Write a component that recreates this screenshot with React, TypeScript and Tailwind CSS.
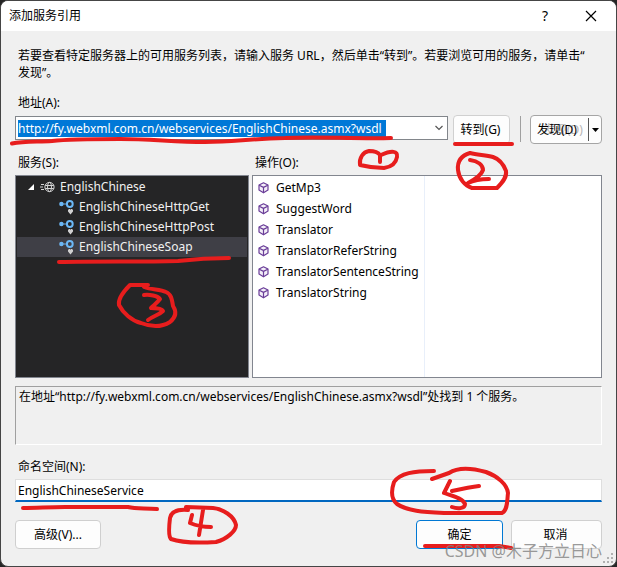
import React, { useState } from 'react';

const SERVICE_URL = 'http://fy.webxml.com.cn/webservices/EnglishChinese.asmx?wsdl';

const ports = ['EnglishChineseHttpGet', 'EnglishChineseHttpPost', 'EnglishChineseSoap'];

const operations = [
  'GetMp3',
  'SuggestWord',
  'Translator',
  'TranslatorReferString',
  'TranslatorSentenceString',
  'TranslatorString',
];

function ServiceIcon() {
  return (
    <svg className="h-3 w-4 shrink-0" viewBox="0 0 16 12" fill="none" stroke="#d4d4d4" strokeWidth="1">
      <circle cx="9.5" cy="6" r="4.6" />
      <ellipse cx="9.5" cy="6" rx="2" ry="4.6" />
      <path d="M5.2 4.5h8.6M5.2 7.5h8.6M1 3.5h3M0 6h3M1 8.5h3" />
    </svg>
  );
}

function PortIcon() {
  return (
    <svg className="h-4 w-4 shrink-0" viewBox="0 0 16 16">
      <circle cx="2.4" cy="5" r="2.2" fill="#6cb8f6" />
      <path d="M4 5h4" stroke="#6cb8f6" strokeWidth="1.2" />
      <circle cx="10.8" cy="5" r="2.9" fill="none" stroke="#6cb8f6" strokeWidth="2" />
      <path
        d="M11.5 15.5 9 12.6v-1.7l1-.9h.8l.7.7.7-.7h.8l1 .9v1.7z"
        fill="#d0d0d0"
      />
    </svg>
  );
}

function MethodIcon() {
  return (
    <svg
      className="h-3 w-3 shrink-0"
      viewBox="0 0 12 12"
      fill="#f3eef8"
      stroke="#6a3d98"
      strokeWidth="1.2"
      strokeLinejoin="round"
    >
      <path d="M5.5 .8 10 3v5l-4.500 2.800L1 8V3z" />
      <path d="M1.200 3.200 5.5 5.400l4.300-2.200M5.5 5.400v5" fill="none" />
    </svg>
  );
}

// Freehand marker strokes that number the steps
function Markers() {
  return (
    <svg
      className="pointer-events-none absolute left-0 top-0 h-[567px] w-[617px]"
      viewBox="0 0 617 567"
      fill="none"
      stroke="#e71d1d"
      strokeWidth="4"
      strokeLinecap="round"
      strokeLinejoin="round"
      aria-hidden="true"
    >
      <path d="M12 143.5C24 141 38 142 52 141C70 139 90 139 120 139C150 139 175 142 205 142C235 142 245 139 285 138C320 136 350 139 391 138" />
      <path d="M380 162V155C378 152 374 151 369 151C363 152 359 158 360 165C368 167 376 168 384 168C391 167 396 163 397 157C398 151 392 150 381 155" />
      <path d="M455 144H512" />
      <path d="M493 157C486 155 478 155 470 153C463 155 457 160 458 170C459 179 465 186 472 188H497C503 182 507 177 506 171C503 163 499 159 493 157M470 160C478 161 483 165 483 170C481 176 474 180 468 183C474 180 482 179 489 179" />
      <path d="M59 262C100 261 140 262 178 261C195 259 208 258 229 258" />
      <path d="M148 285H130C123 292 118 300 119 305C123 313 132 321 141 323C151 327 162 327 170 322C176 317 177 312 173 306C172 299 171 294 166 292C160 289 152 290 144 287M144 295C149 294 158 296 160 299C157 303 154 305 151 308C156 308 162 309 163 311C159 315 153 316 148 320" />
      <path d="M23 508C38 508 48 507 65 507H128C136 509 144 508 157 509" />
      <path d="M188 510C176 509 171 512 170 518C169 526 168 536 171 539C182 543 200 543 216 542C227 539 236 531 236 525C234 516 223 509 213 508L186 507M192 515L190 523C197 526 204 527 211 527M203 510L199 535" />
      <path d="M434 471C414 471 400 473 394 482C391 491 391 499 397 504C407 511 423 512 444 513H502C508 510 507 500 508 493C507 484 497 476 486 472C472 468 458 467 449 473L432 479M450 481L444 493C452 496 463 498 465 504C465 509 457 509 452 507M452 491C461 489 470 487 479 486" />
      <path d="M425 546H499L511 548" />
    </svg>
  );
}

export default function App() {
  const [address, setAddress] = useState(SERVICE_URL);
  const [namespaceName, setNamespaceName] = useState('EnglishChineseService');
  const [selected, setSelected] = useState('EnglishChineseSoap');

  return (
    <div className="relative bg-[#252525] font-['Noto_Sans','Noto_Sans_CJK_SC',sans-serif] text-xs text-black">
      <main className="overflow-hidden rounded-lg border border-[#454545] bg-[#f0f0f0]">
        <header className="flex h-[30px] items-center bg-white pl-2 pr-[17px]">
          <h1 className="flex-1">添加服务引用</h1>
          <button type="button" aria-label="帮助" className="mr-8 w-3 text-sm leading-4">?</button>
          <button type="button" aria-label="关闭" className="p-0.5">
            <svg className="h-3 w-3" viewBox="0 0 12 12" stroke="#000" strokeWidth="1.2">
              <path d="M1 1l10 10M11 1 1 11" />
            </svg>
          </button>
        </header>

        <div className="px-[14px] pb-[17px] pt-4">
          <p className="px-[3px] leading-[17px]">
            若要查看特定服务器上的可用服务列表，请输入服务 URL，然后单击“转到”。若要浏览可用的服务，请单击“<br />发现”。
          </p>

          <label htmlFor="address" className="ml-[3px] mt-[14px] block leading-4">地址(A):</label>
          <div className="mt-[5px] flex items-start">
            <div className="flex h-6 min-w-0 flex-1 items-center border border-[#82868b] bg-white pl-0.5 pr-1">
              <input
                id="address"
                value={address}
                onChange={(e) => setAddress(e.target.value)}
                className="h-[17px] min-w-0 field-sizing-content bg-[#0078d7] pr-1 text-white outline-none"
              />
              <button type="button" aria-label="显示地址列表" className="ml-auto">
                <svg className="h-2 w-2" viewBox="0 0 8 8" fill="none" stroke="#555" strokeWidth="1.2">
                  <path d="M0.500 2 4 5.500 7.500 2" />
                </svg>
              </button>
            </div>
            <button
              type="button"
              className="-mt-px ml-[5px] h-[29px] w-[57px] rounded border border-[#d0d0d0] bg-[#fdfdfd] pr-0.5"
            >
              转到(G)
            </button>
            <div className="ml-[10px] h-[26px] w-px bg-[#a0a0a0]" />
            <div className="-mt-px ml-[9px] flex h-[29px] w-[72px] rounded border border-[#a5a5a5] bg-[#fdfdfd]">
              <button type="button" className="relative flex-1 whitespace-nowrap pl-1.5 text-left">
                <span aria-hidden="true" className="absolute left-3 top-1.5 leading-4 text-[#b5b5b5]">发现(D)</span>
                <span className="relative">发现(D)</span>
              </button>
              <button
                type="button"
                aria-label="更多发现选项"
                className="my-0.5 flex w-[13px] items-center justify-center border-l border-[#555]"
              >
                <svg className="h-1 w-[7px]" viewBox="0 0 7 4">
                  <path d="M0 0h7L3.500 4z" />
                </svg>
              </button>
            </div>
          </div>

          <div className="mt-[11px] grid grid-cols-[234fr_350fr] gap-x-[3px]">
            <h2 id="services" className="ml-[3px] leading-4">服务(S):</h2>
            <h2 id="operations" className="ml-[3px] leading-4">操作(O):</h2>

            <section
              aria-labelledby="services"
              className="mt-1 h-[203px] border border-[#82868f] bg-[#252526] px-px pt-px text-[#f1f1f1]"
            >
              <div className="flex h-5 items-center pl-[11px]">
                <svg className="mr-1.5 h-1.5 w-1.5" viewBox="0 0 6 6" fill="#fff">
                  <path d="M6 0v6H0z" />
                </svg>
                <ServiceIcon />
                <span className="ml-1">EnglishChinese</span>
              </div>
              <ul>
                {ports.map((port) => (
                  <li key={port}>
                    <button
                      type="button"
                      onClick={() => setSelected(port)}
                      className={`flex h-5 w-full items-center gap-1 pl-[42px] text-left ${
                        port === selected ? 'bg-[#3f3f46]' : ''
                      }`}
                    >
                      <PortIcon />
                      {port}
                    </button>
                  </li>
                ))}
              </ul>
            </section>

            <section
              aria-labelledby="operations"
              className="mt-1 h-[203px] border border-[#82868f] bg-white"
            >
              <ul className="h-full w-[172px] border-r border-[#e8effa] pt-px">
                {operations.map((operation) => (
                  <li key={operation} className="flex h-[21px] items-center gap-[6px] pl-[5px]">
                    <MethodIcon />
                    {operation}
                  </li>
                ))}
              </ul>
            </section>
          </div>

          <div className="mt-2 h-[59px] border border-b-white border-l-[#a0a0a0] border-r-white border-t-[#a0a0a0] pl-[3px] pt-px">
            <output className="block leading-[17px]">在地址“{SERVICE_URL}”处找到 1 个服务。</output>
          </div>

          <label htmlFor="namespace" className="ml-[3px] mt-[14px] block leading-4">命名空间(N):</label>
          <input
            id="namespace"
            value={namespaceName}
            onChange={(e) => setNamespaceName(e.target.value)}
            className="mt-1 block h-[23px] w-full border border-b-2 border-[#dedede] border-b-[#0067c0] bg-white px-0.5 outline-none"
          />

          <footer className="mt-[18px] flex h-[29px]">
            <button type="button" className="w-[86px] rounded border border-[#cfcfcf] bg-[#fdfdfd]">高级(V)...</button>
            <button type="button" className="ml-auto w-[87px] rounded border border-[#0078d4] bg-[#fdfdfd]">确定</button>
            <button type="button" className="ml-2 w-[91px] rounded border border-[#d0d0d0] bg-[#fdfdfd] pr-0.5">取消</button>
          </footer>
        </div>
      </main>

      <svg className="absolute bottom-1 right-1 h-2.5 w-2.5" viewBox="0 0 10 10" fill="#b0b0b0">
        <path d="M8 0h2v2H8zM4 4h2v2H4zM8 4h2v2H8zM0 8h2v2H0zM4 8h2v2H4zM8 8h2v2H8z" />
      </svg>
      <Markers />
      <span className="pointer-events-none absolute bottom-1.5 right-[15px] text-base leading-5 text-[#808080]/80">
        CSDN @木子方立日心
      </span>
    </div>
  );
}
